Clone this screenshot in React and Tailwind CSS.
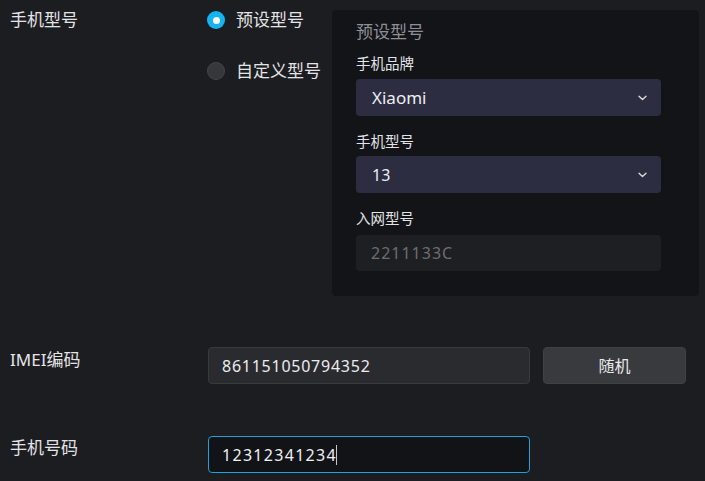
import React from "react";

const cjk = { fontFamily: '"Noto Sans", "Noto Sans CJK SC", sans-serif' };

function Chevron() {
  return (
    <svg width="9" height="6" viewBox="0 0 9 6" fill="none">
      <path d="M1 1.2L4.5 4.6L8 1.2" stroke="#d8d8dc" strokeWidth="1.4" strokeLinecap="round" strokeLinejoin="round" />
    </svg>
  );
}

function Select({ value, size }) {
  return (
    <div className="w-[305px] h-[37px] rounded-[4px] bg-[#2c2d40] flex items-center justify-between pl-4 pr-[14px]">
      <span className={size === "lg" ? "text-[17px] text-[#eeeef0] leading-5" : "text-[16px] text-[#eeeef0] leading-5"}>{value}</span>
      <Chevron />
    </div>
  );
}

export default function App() {
  return (
    <div className="w-[705px] h-[481px] overflow-hidden bg-[#1c1d21] text-[#e4e4e6]" style={cjk}>
      <div className="flex pt-[10px]">
        <div className="w-[208px] pl-[10px] text-[17px] leading-5">手机型号</div>
        <div className="w-[124px] flex flex-col -ml-px">
          <div className="flex items-center h-5 gap-[11px]">
            <div className="w-[18px] h-[18px] rounded-full bg-[#14b3f4] flex items-center justify-center">
              <div className="w-[7px] h-[7px] rounded-full bg-white" />
            </div>
            <span className="text-[17px] leading-5">预设型号</span>
          </div>
          <div className="flex items-center h-5 gap-[11px] mt-[31px]">
            <div className="w-[18px] h-[18px] rounded-full bg-[#36373b] border border-[#44454a]" />
            <span className="text-[17px] leading-5">自定义型号</span>
          </div>
        </div>
        <div className="w-[367px] h-[286px] rounded-[4px] bg-[#131418] pl-6 pt-3 flex flex-col ml-px">
          <div className="text-[17px] leading-5 text-[#8f9095]">预设型号</div>
          <div className="text-[14.5px] leading-[18px] mt-3 text-[#e4e4e6]">手机品牌</div>
          <div className="mt-[7px]">
            <Select value="Xiaomi" size="lg" />
          </div>
          <div className="text-[14.5px] leading-[18px] mt-4 text-[#e4e4e6]">手机型号</div>
          <div className="mt-[6px]">
            <Select value="13" />
          </div>
          <div className="text-[14.5px] leading-[18px] mt-4 text-[#e4e4e6]">入网型号</div>
          <div className="mt-2 w-[305px] h-[36px] rounded-[4px] bg-[#1e1f22] flex items-center pl-[15px]">
            <span className="text-[16px] text-[#6c6d71] tracking-[1px]">2211133C</span>
          </div>
        </div>
      </div>

      <div className="flex mt-[51px]">
        <div className="w-[208px] pl-[10px] pt-[3px] text-[17px] leading-5">IMEI编码</div>
        <div className="w-[322px] h-[37px] rounded-[4px] bg-[#2a2b2f] border border-[#393a3e] flex items-center pl-[13px]">
          <span className="text-[16px] tracking-[0.75px] text-[#ececee]">861151050794352</span>
        </div>
        <div className="ml-[13px] w-[143px] h-[37px] rounded-[4px] bg-[#383a3e] border border-[#3f4145] flex items-center justify-center text-[16px] text-[#e8e8ea]">
          随机
        </div>
      </div>

      <div className="flex mt-[52px]">
        <div className="w-[208px] pl-[10px] pt-[2px] text-[17px] leading-5">手机号码</div>
        <div className="w-[322px] h-[37px] rounded-[4px] bg-[#121316] border border-[#1aa3dc] flex items-center pl-[13px]">
          <span className="text-[16px] tracking-[1.3px] text-[#f0f0f2]">12312341234</span>
          <span className="w-px h-[20px] bg-[#c8c8c8] ml-[-1px]" />
        </div>
      </div>
    </div>
  );
}
